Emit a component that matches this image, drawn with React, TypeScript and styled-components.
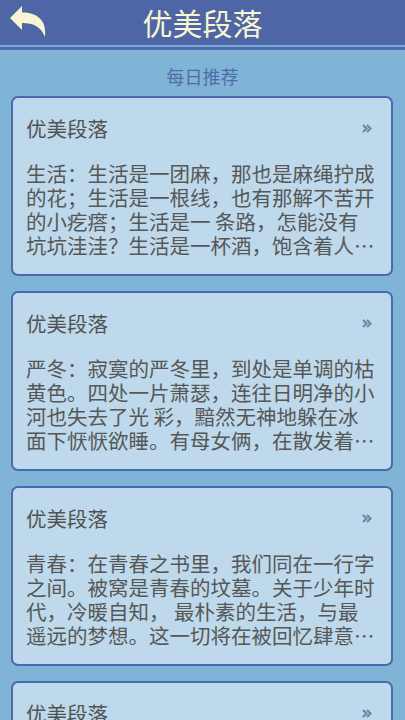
import styled, { createGlobalStyle } from "styled-components";

const items = [
  {
    title: "优美段落",
    text: "生活：生活是一团麻，那也是麻绳拧成的花；生活是一根线，也有那解不苦开的小疙瘩；生活是一 条路，怎能没有坑坑洼洼？生活是一杯酒，饱含着人…",
  },
  {
    title: "优美段落",
    text: "严冬：寂寞的严冬里，到处是单调的枯黄色。四处一片萧瑟，连往日明净的小河也失去了光 彩，黯然无神地躲在冰面下恹恹欲睡。有母女俩，在散发着…",
  },
  {
    title: "优美段落",
    text: "青春：在青春之书里，我们同在一行字之间。被窝是青春的坟墓。关于少年时代，冷暖自知，  最朴素的生活，与最遥远的梦想。这一切将在被回忆肆意…",
  },
  {
    title: "优美段落",
    text: "春天：春天像刚落地的娃娃，从头到脚都是新的，它生长着。",
  },
];

function BackIcon() {
  return (
    <svg width="42" height="36" viewBox="0 0 42 36">
      <path
        d="M2 15 L14 3 L14 9.5 C29 9.5 39 17 37 34 C33 24 26 20 14 20 L14 27 Z"
        fill="#f8f5d2"
      />
    </svg>
  );
}

function Chevron() {
  return (
    <svg width="10" height="9" viewBox="0 0 10 9">
      <path
        d="M1 1 L4.5 4.5 L1 8 M5 1 L8.5 4.5 L5 8"
        fill="none"
        stroke="#6a8ba8"
        strokeWidth="2.2"
      />
    </svg>
  );
}

export default function App() {
  return (
    <>
      <GlobalStyle />
      <Page>
        <Header>
          <BackButton>
            <BackIcon />
          </BackButton>
          <HeaderTitle>优美段落</HeaderTitle>
          <span />
        </Header>
        <Subtitle>每日推荐</Subtitle>
        <List>
          {items.map((it, i) => (
            <Card key={i}>
              <CardHead>
                <CardTitle>{it.title}</CardTitle>
                <Chevron />
              </CardHead>
              <CardText>{it.text}</CardText>
            </Card>
          ))}
        </List>
      </Page>
    </>
  );
}

const GlobalStyle = createGlobalStyle`
  html, body {
    margin: 0;
    background: #80b4d7;
    overflow: hidden;
  }
  body {
    font-family: "Noto Sans CJK SC", "Noto Sans", sans-serif;
  }
`;

const Page = styled.div`
  width: 405px;
  height: 720px;
  overflow: hidden;
  background: #80b4d7;
`;

const Header = styled.header`
  height: 50px;
  display: grid;
  grid-template-columns: 56px 1fr 56px;
  align-items: start;
  background: linear-gradient(
    to bottom,
    #4e66a5 0,
    #4e66a5 45px,
    #7aa8d8 45px,
    #7aa8d8 47px,
    #4d6cad 47px,
    #4d6cad 50px
  );
`;

const BackButton = styled.button`
  background: transparent;
  border: none;
  padding: 3px 0 0 8px;
  margin: 0;
  display: flex;
  cursor: pointer;
`;

const HeaderTitle = styled.h1`
  margin: 0;
  text-align: center;
  font-size: 30px;
  font-weight: 400;
  line-height: 44px;
  color: #f8f5d2;
`;

const Subtitle = styled.div`
  text-align: center;
  padding-top: 16px;
  height: 30px;
  line-height: 20px;
  font-size: 18px;
  color: #4f6ca6;
`;

const List = styled.div`
  display: flex;
  flex-direction: column;
  gap: 15px;
  padding: 0 12px 0 11px;
`;

const Card = styled.div`
  flex: none;
  height: 180px;
  box-sizing: border-box;
  border: 2px solid #4b69ad;
  border-radius: 7px;
  background: #bdd9eb;
  padding: 15px 19px 17px 13px;
`;

const CardHead = styled.div`
  display: flex;
  justify-content: space-between;
  align-items: center;
  height: 30px;
  margin-bottom: 18px;
`;

const CardTitle = styled.div`
  font-size: 20.5px;
  line-height: 30px;
  color: #525252;
`;

const CardText = styled.p`
  margin: 0;
  width: 352px;
  font-size: 20.5px;
  line-height: 24px;
  color: #575757;
`;
